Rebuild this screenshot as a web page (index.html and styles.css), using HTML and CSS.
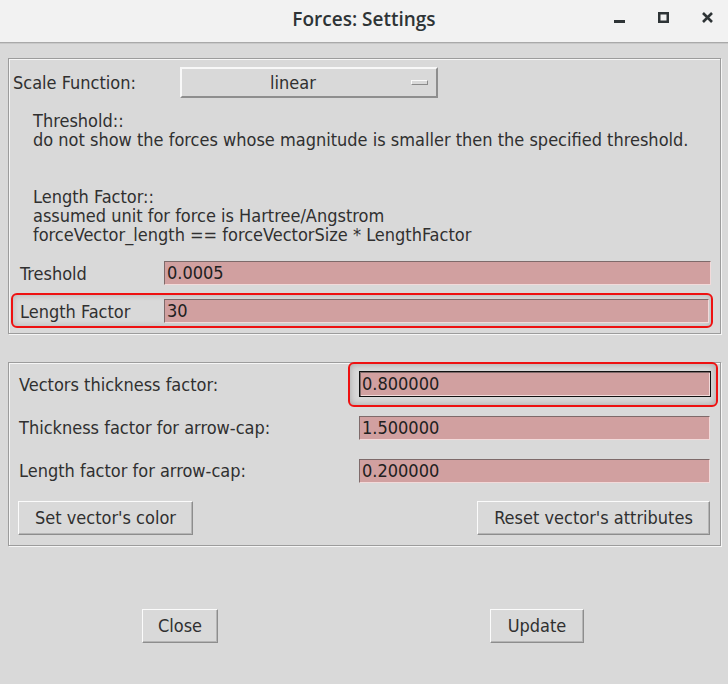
FILE: index.html
```
<!DOCTYPE html>
<html>
<head>
<meta charset="utf-8">
<link rel="stylesheet" href="styles.css">
</head>
<body>
<div class="window">
  <header class="titlebar">
    <div class="title">Forces: Settings</div>
    <div class="controls">
      <svg class="ctl" width="20" height="20" viewBox="0 0 20 20"><rect x="4" y="12" width="11" height="3" fill="#2e3436"/></svg>
      <svg class="ctl" width="20" height="20" viewBox="0 0 20 20"><rect x="5.25" y="5.25" width="8.5" height="8.5" fill="none" stroke="#2e3436" stroke-width="2.5"/></svg>
      <svg class="ctl" width="20" height="20" viewBox="0 0 20 20"><path d="M5 5 L14 14 M14 5 L5 14" stroke="#2e3436" stroke-width="2.6"/></svg>
    </div>
  </header>
  <main class="content">
    <section class="frame frame-top">
      <div class="scale-row">
        <span class="scale-label">Scale Function:</span>
        <div class="menubutton"><span class="mb-text">linear</span><span class="indicator"></span></div>
      </div>
      <div class="desc">Threshold::<br>do not show the forces whose magnitude is smaller then the specified threshold.<br><br><br>Length Factor::<br>assumed unit for force is Hartree/Angstrom<br>forceVector_length == forceVectorSize * LengthFactor</div>
      <div class="field-row">
        <span class="field-label">Treshold</span>
        <div class="entry">0.0005</div>
      </div>
      <div class="field-row highlight">
        <span class="field-label">Length Factor</span>
        <div class="entry">30</div>
      </div>
    </section>
    <section class="frame frame-bottom">
      <div class="grid">
        <span class="g-label">Vectors thickness factor:</span>
        <div class="g-cell"><div class="focus-wrap"><div class="entry focused">0.800000</div></div></div>
        <span class="g-label">Thickness factor for arrow-cap:</span>
        <div class="g-cell"><div class="entry g-entry">1.500000</div></div>
        <span class="g-label">Length factor for arrow-cap:</span>
        <div class="g-cell"><div class="entry g-entry">0.200000</div></div>
      </div>
      <div class="btn-row">
        <div class="btn btn-color">Set vector's color</div>
        <div class="btn btn-reset">Reset vector's attributes</div>
      </div>
    </section>
    <div class="footer">
      <div class="btn btn-close">Close</div>
      <div class="btn btn-update">Update</div>
    </div>
  </main>
</div>
</body>
</html>
```
FILE: styles.css
```
html, body {
  margin: 0;
  padding: 0;
}
body {
  width: 728px;
  height: 684px;
  background: #d9d9d9;
  overflow: hidden;
  font-family: "DejaVu Sans Condensed", "DejaVu Sans", sans-serif;
  font-size: 18px;
  color: #303030;
}
.window {
  width: 728px;
  height: 684px;
}
.titlebar {
  height: 42px;
  background: #f2f2f2;
  border-bottom: 1px solid #a9a9a9;
  box-shadow: 0 1px 0 #c8c8c8;
  display: flex;
  align-items: center;
  justify-content: center;
  position: relative;
}
.title {
  font-family: "Open Sans", "DejaVu Sans", sans-serif;
  font-weight: 600;
  font-size: 19px;
  color: #2e3436;
  margin-top: -4px;
}
.controls {
  position: absolute;
  right: 10px;
  top: 8px;
  display: flex;
  gap: 24px;
}
.ctl {
  display: block;
}
.content {
  padding: 15px 7px 0 8px;
}
.frame {
  border: 1px solid #9c9c9c;
  box-shadow: inset 1px 1px 0 #f6f6f6, 1px 1px 0 #f6f6f6;
}
.frame-top {
  padding: 8px 7px 5px 3px;
}
.scale-row {
  display: flex;
  align-items: center;
  height: 31px;
}
.scale-label {
  width: 167px;
  margin-left: 1px;
}
.menubutton {
  width: 254px;
  height: 27px;
  border: 2px solid;
  border-color: #f8f8f8 #8e8e8e #8e8e8e #f8f8f8;
  display: flex;
  align-items: center;
  position: relative;
}
.mb-text {
  flex: 1;
  text-align: center;
  padding-right: 44px;
  padding-left: 12px;
}
.indicator {
  position: absolute;
  right: 8px;
  top: 11px;
  width: 15px;
  height: 3px;
  border: 1px solid;
  border-color: #fafafa #8a8a8a #8a8a8a #fafafa;
  background: #d9d9d9;
}
.desc {
  margin: 13px 0 0 21px;
  line-height: 19px;
}
.field-row {
  display: flex;
  align-items: center;
  margin-top: 17px;
  padding: 0 2px 0 8px;
}
.field-label {
  width: 144px;
}
.entry {
  flex: 1;
  height: 22px;
  line-height: 22px;
  background: #d1a0a0;
  border: 1px solid;
  border-color: #7e6a6a #f2dada #f2dada #7e6a6a;
  padding-left: 2px;
  color: #202020;
}
.field-row.highlight {
  margin-top: 8px;
  margin-left: -1px;
  border: 2px solid #ee1111;
  border-radius: 6px;
  padding: 4px 2px 3px 7px;
  box-shadow: inset 0 0 6px rgba(0, 0, 0, 0.18);
}
.frame-bottom {
  margin-top: 28px;
  padding: 0 8px 10px 10px;
}
.grid {
  display: grid;
  grid-template-columns: 340px 1fr;
  grid-auto-rows: 43px;
  align-items: center;
}
.g-cell {
  display: flex;
  align-items: center;
}
.g-entry {
  margin-right: 2px;
}
.focus-wrap {
  flex: 1;
  display: flex;
  margin: 0 -6px 0 -11px;
  height: 27px;
  padding: 7px 5px 7px 9px;
  border: 2px solid #ee1111;
  border-radius: 6px;
  box-shadow: inset 0 0 7px rgba(0, 0, 0, 0.25);
}
.entry.focused {
  height: 24px;
  line-height: 24px;
  border: 1px solid #111;
  box-shadow: inset 1px 1px 0 #7e6a6a, inset -1px -1px 0 #f2dada;
  padding-left: 2px;
}
.btn-row {
  display: flex;
  justify-content: space-between;
  margin: 9px 2px 0 -1px;
}
.btn {
  height: 32px;
  line-height: 32px;
  border: 1px solid;
  border-color: #fbfbfb #8d8d8d #8d8d8d #fbfbfb;
  box-shadow: inset -1px -1px 0 #b5b5b5;
  text-align: center;
  box-sizing: content-box;
}
.btn-color {
  width: 173px;
}
.btn-reset {
  width: 231px;
}
.footer {
  display: flex;
  margin-top: 63px;
  padding-left: 134px;
}
.btn-close {
  width: 74px;
}
.btn-update {
  width: 92px;
  margin-left: 272px;
}
```
